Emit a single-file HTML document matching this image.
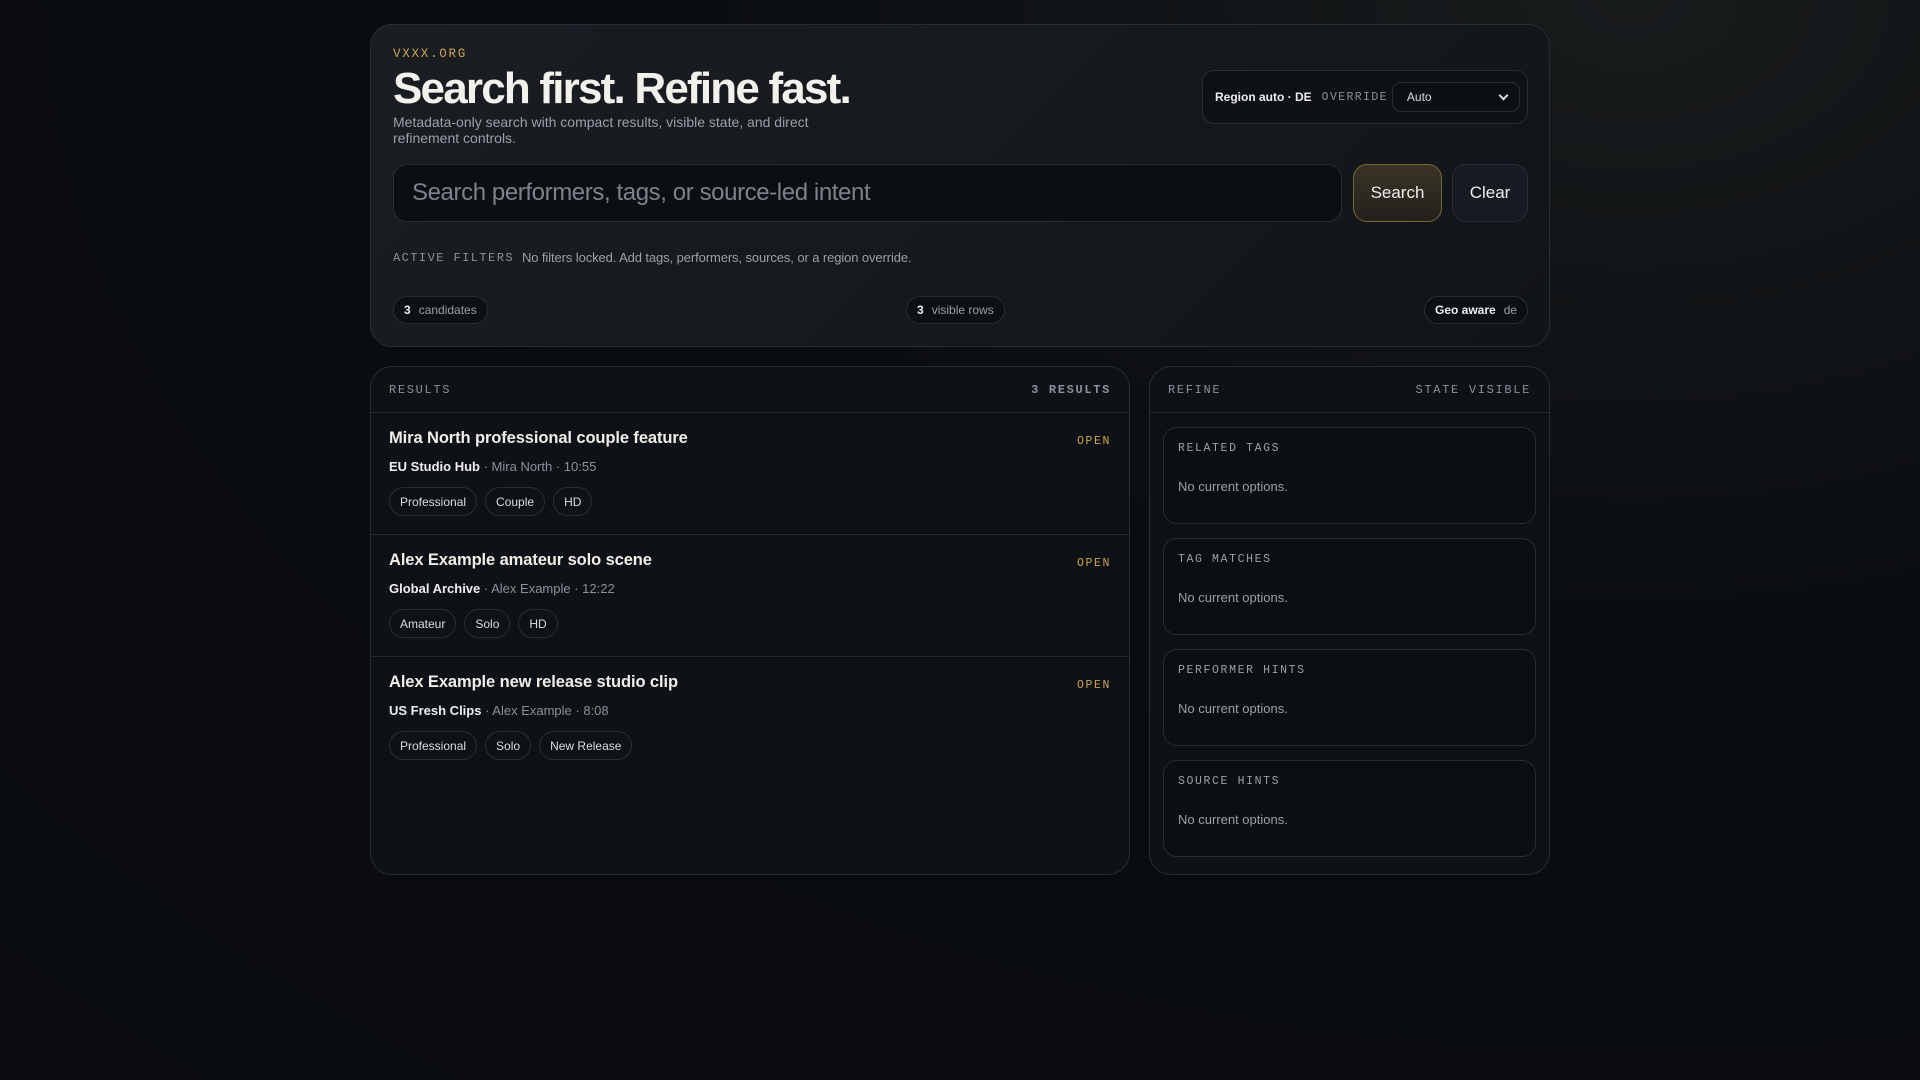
<!DOCTYPE html>
<html><head><meta charset="utf-8"><style>
*{box-sizing:border-box;margin:0;padding:0}
html,body{width:1920px;height:1080px;overflow:hidden}
body{background:radial-gradient(ellipse at 85% 0%,#181b1c 0%,#0b0e11 40%,#090b0e 100%);font-family:"Liberation Sans",Arial,sans-serif;color:#e8e6e1;position:relative}
.mono{font-family:"Liberation Mono",monospace;letter-spacing:.14em;text-transform:uppercase}
.abs{position:absolute}
.top{left:370px;top:24px;width:1180px;height:323px;border:1px solid #262d36;border-radius:22px;background:linear-gradient(135deg,#1a1e23,#111418)}
.brand{left:22px;top:22px;font-size:12.5px;color:#c9a44f}
h1{position:absolute;left:22px;top:38px;font-size:44px;font-weight:700;letter-spacing:-1.8px;color:#f3f1ec;line-height:1.2}
.sub{left:22px;top:89px;width:450px;font-size:14px;line-height:16px;color:#9aa0a8}
.region{left:831px;top:45px;width:326px;height:54px;border:1px solid #262d36;border-radius:12px;background:#0e1115;display:flex;align-items:center;padding-left:12px}
.region b{font-size:12px;color:#eee}
.region .mono{font-size:11.5px;color:#8a919a;margin-left:10px;letter-spacing:.12em}
.sel{margin-left:4px;width:128px;height:30px;border:1px solid #262d36;border-radius:9px;background:#0c0f13;font-size:12px;color:#ddd;padding-left:14px;display:flex;align-items:center;position:relative}
.sel:after{content:"";position:absolute;right:12px;top:9px;width:5px;height:5px;border-right:2px solid #ddd;border-bottom:2px solid #ddd;transform:rotate(45deg)}
.input{left:22px;top:139px;width:949px;height:58px;border:1px solid #262d36;border-radius:14px;background:#0b0e12;font-size:24px;color:#7d838b;padding-left:18px;line-height:56px;letter-spacing:-.4px}
.btn{top:139px;height:58px;border-radius:14px;font-size:17px;display:flex;align-items:center;justify-content:center}
.search{left:982px;width:89px;border:1px solid #7a6634;background:linear-gradient(180deg,#3a3426,#22211c);color:#eee}
.clear{left:1081px;width:76px;border:1px solid #262d36;background:#171b21;color:#eee}
.af{left:22px;top:225px;font-size:13px;color:#9aa0a8;display:flex;align-items:center;letter-spacing:-.1px}
.af .mono{font-size:12px;color:#8a919a;margin-right:8px;letter-spacing:.12em}
.chip{top:271px;height:28px;border:1px solid #262d36;border-radius:14px;background:#0c0f13;font-size:12px;color:#9aa0a8;display:flex;align-items:center;padding:0 10px}
.chip b{color:#eee;margin-right:8px}
.panel{border:1px solid #262d36;border-radius:22px;background:#0e1115;top:366px;height:509px}
.ph{height:46px;border-bottom:1px solid #232a33;display:flex;justify-content:space-between;align-items:center;padding:0 18px;font-size:12px;color:#8a919a}
.row{height:122px;border-bottom:1px solid #232a33;padding:16px 18px 0;position:relative}
.row:last-child{border-bottom:none}
.t{font-size:16.5px;font-weight:700;color:#f0eee9;letter-spacing:-.1px}
.open{position:absolute;right:18px;top:22px;font-size:11.5px;color:#c9a44f}
.m{font-size:13px;color:#8a919a;margin-top:11px}
.m b{color:#eee}
.tags{display:flex;gap:8px;margin-top:13px}
.tag{height:29px;border:1px solid #262d36;border-radius:15px;padding:0 10px;font-size:12px;color:#ddd;display:flex;align-items:center}
.card{margin:14px 13px 0;height:97px;border:1px solid #262d36;border-radius:14px;background:#0b0e12;padding:14px 14px}
.card .mono{font-size:11.5px;color:#9aa0a8;letter-spacing:.14em}
.card p{font-size:13px;color:#9aa0a8;margin-top:24px}
</style></head><body>
<div class="abs top">
<div class="abs brand mono">vxxx.org</div>
<h1>Search first. Refine fast.</h1>
<div class="abs sub">Metadata-only search with compact results, visible state, and direct refinement controls.</div>
<div class="abs region"><b>Region auto · DE</b><span class="mono">Override</span><div class="sel">Auto</div></div>
<div class="abs input">Search performers, tags, or source-led intent</div>
<div class="abs btn search">Search</div>
<div class="abs btn clear">Clear</div>
<div class="abs af"><span class="mono">Active filters</span>No filters locked. Add tags, performers, sources, or a region override.</div>
<div class="abs chip" style="left:22px"><b>3</b>candidates</div>
<div class="abs chip" style="left:535px"><b>3</b>visible rows</div>
<div class="abs chip" style="left:1053px"><b>Geo aware</b>de</div>
</div>

<div class="abs panel" style="left:370px;width:760px">
<div class="ph"><span class="mono">Results</span><span class="mono" style="font-weight:700">3 results</span></div>
<div class="row"><div class="t">Mira North professional couple feature</div><span class="open mono">Open</span><div class="m"><b>EU Studio Hub</b> · Mira North · 10:55</div><div class="tags"><span class="tag">Professional</span><span class="tag">Couple</span><span class="tag">HD</span></div></div>
<div class="row"><div class="t">Alex Example amateur solo scene</div><span class="open mono">Open</span><div class="m"><b>Global Archive</b> · Alex Example · 12:22</div><div class="tags"><span class="tag">Amateur</span><span class="tag">Solo</span><span class="tag">HD</span></div></div>
<div class="row"><div class="t">Alex Example new release studio clip</div><span class="open mono">Open</span><div class="m"><b>US Fresh Clips</b> · Alex Example · 8:08</div><div class="tags"><span class="tag">Professional</span><span class="tag">Solo</span><span class="tag">New Release</span></div></div>
</div>

<div class="abs panel" style="left:1149px;width:401px">
<div class="ph"><span class="mono">Refine</span><span class="mono">State visible</span></div>
<div class="card"><div class="mono">Related tags</div><p>No current options.</p></div>
<div class="card"><div class="mono">Tag matches</div><p>No current options.</p></div>
<div class="card"><div class="mono">Performer hints</div><p>No current options.</p></div>
<div class="card"><div class="mono">Source hints</div><p>No current options.</p></div>
</div>
</body></html>
